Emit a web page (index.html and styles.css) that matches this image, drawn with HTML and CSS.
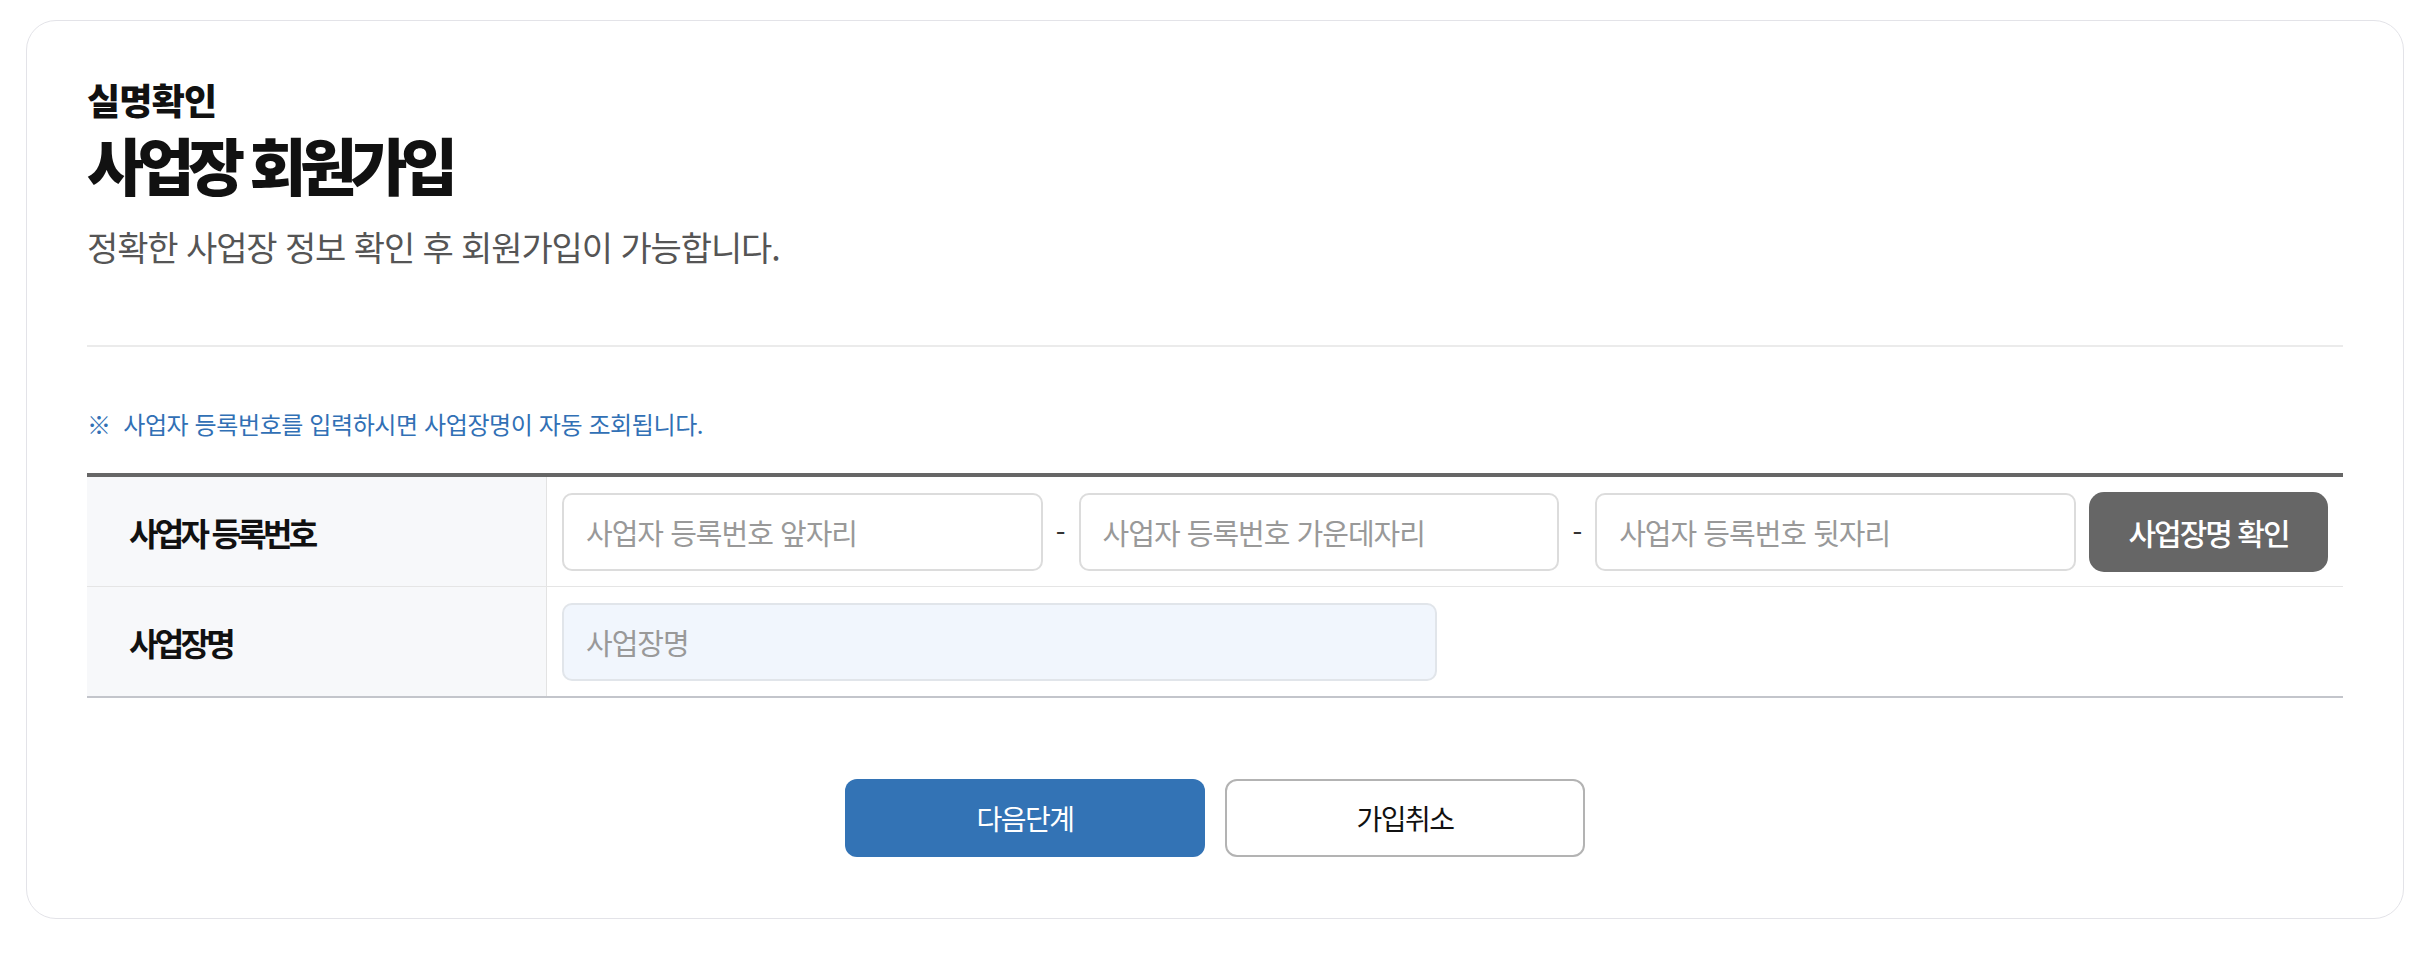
FILE: index.html
```html
<!DOCTYPE html>
<html lang="ko">
<head>
    <meta charset="UTF-8">
    <meta name="viewport" content="width=device-width, initial-scale=1.0">
    <title>사업장 회원가입</title>
    <link rel="stylesheet" href="styles.css">
</head>
<body>
    <div class="join-card">
        <div class="join-head">
            <p class="join-step">실명확인</p>
            <h1 class="join-title">사업장 회원가입</h1>
            <p class="join-desc">정확한 사업장 정보 확인 후 회원가입이 가능합니다.</p>
        </div>

        <p class="join-notice">※&nbsp; 사업자 등록번호를 입력하시면 사업장명이 자동 조회됩니다.</p>

        <div class="form-table">
            <div class="form-row">
                <div class="form-label">사업자 등록번호</div>
                <div class="form-field">
                    <input type="text" class="form-input" placeholder="사업자 등록번호 앞자리">
                    <span class="form-dash">-</span>
                    <input type="text" class="form-input" placeholder="사업자 등록번호 가운데자리">
                    <span class="form-dash">-</span>
                    <input type="text" class="form-input" placeholder="사업자 등록번호 뒷자리">
                    <button type="button" class="btn-check">사업장명 확인</button>
                </div>
            </div>
            <div class="form-row">
                <div class="form-label">사업장명</div>
                <div class="form-field">
                    <input type="text" class="form-input form-input-readonly" placeholder="사업장명" readonly>
                </div>
            </div>
        </div>

        <div class="btn-area">
            <button type="button" class="btn btn-primary">다음단계</button>
            <button type="button" class="btn btn-outline">가입취소</button>
        </div>
    </div>
</body>
</html>
```

FILE: styles.css
```css
body {
    font-family: "Noto Sans CJK KR", "Noto Sans", sans-serif;
    background-color: #fff;
    color: #111;
    margin: 0;
    padding: 0;
}
.join-card {
    margin: 20px 6px 0 26px;
    padding: 60px 60px 61px;
    border: 1px solid #e3e3e8;
    border-radius: 30px;
    background-color: #fff;
}
.join-head {
    padding-bottom: 78px;
    border-bottom: 2px solid #ebebeb;
}
.join-step {
    margin: 0;
    font-size: 36px;
    line-height: 36px;
    font-weight: 800;
    letter-spacing: -0.8px;
}
.join-title {
    margin: 12px 0 0;
    font-size: 62px;
    line-height: 70px;
    font-weight: 800;
    letter-spacing: -6.5px;
}
.join-desc {
    margin: 28px 0 0;
    font-size: 34px;
    line-height: 40px;
    color: #555;
    letter-spacing: -1.1px;
}
.join-notice {
    margin: 62px 0 0;
    font-size: 24px;
    line-height: 30px;
    color: #3170b5;
    letter-spacing: -0.4px;
}
.form-table {
    margin-top: 34px;
    border-top: 4px solid #666;
    border-bottom: 2px solid #c3c5cb;
}
.form-row {
    display: flex;
    height: 109px;
}
.form-row + .form-row {
    border-top: 1px solid #e5e5e5;
}
.form-label {
    width: 460px;
    padding-left: 42px;
    box-sizing: border-box;
    display: flex;
    align-items: center;
    background-color: #f7f8fa;
    border-right: 1px solid #e3e3e3;
    font-size: 32px;
    font-weight: 700;
    letter-spacing: -3.7px;
}
.form-field {
    flex: 1;
    display: flex;
    align-items: center;
    gap: 13px;
    padding: 0 15px;
}
.form-input {
    flex: 1;
    min-width: 0;
    height: 78px;
    padding: 0 22px;
    box-sizing: border-box;
    border: 2px solid #dcdcdc;
    border-radius: 10px;
    font-family: inherit;
    font-size: 29px;
    letter-spacing: -1px;
    color: #333;
}
.form-input::placeholder {
    color: #999;
}
.form-input-readonly {
    flex: none;
    width: 875px;
    background-color: #f1f6fd;
    border-color: #e1e5ea;
}
.form-dash {
    font-size: 28px;
    color: #333;
}
.btn-check {
    width: 239px;
    height: 80px;
    border: none;
    border-radius: 15px;
    background-color: #666;
    color: #fff;
    font-family: inherit;
    font-size: 30px;
    font-weight: 500;
    letter-spacing: -2px;
    cursor: pointer;
}
.btn-area {
    display: flex;
    justify-content: center;
    gap: 20px;
    margin-top: 81px;
}
.btn {
    width: 360px;
    height: 78px;
    border-radius: 12px;
    font-family: inherit;
    font-size: 28px;
    letter-spacing: -1.5px;
    cursor: pointer;
}
.btn-primary {
    border: none;
    background-color: #3373b5;
    color: #fff;
}
.btn-outline {
    border: 2px solid #b3b3b3;
    background-color: #fff;
    color: #111;
}
```
